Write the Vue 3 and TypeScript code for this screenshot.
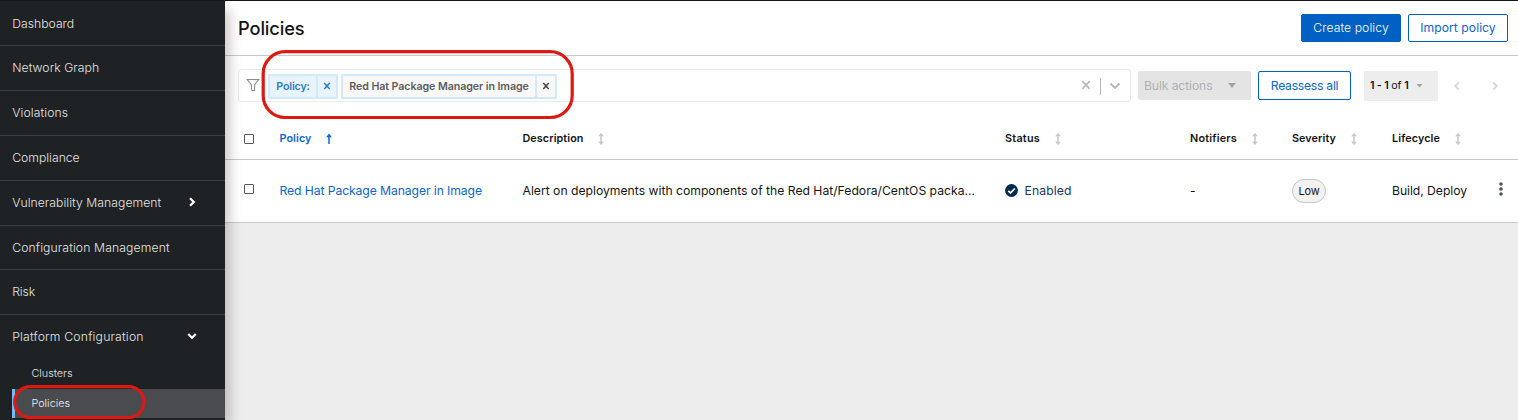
<script setup lang="ts">
import type { Directive } from 'vue'

interface NavItem { label: string; width: number; arrow?: 'right' | 'down' }
interface Column { label: string; width: number; key: string }

const navItems: NavItem[] = [
  { label: 'Dashboard', width: 62 },
  { label: 'Network Graph', width: 87 },
  { label: 'Violations', width: 56 },
  { label: 'Compliance', width: 67.5 },
  { label: 'Vulnerability Management', width: 149, arrow: 'right' },
  { label: 'Configuration Management', width: 157.5 },
  { label: 'Risk', width: 23 },
  { label: 'Platform Configuration', width: 131.5, arrow: 'down' },
]

const columns: Column[] = [
  { label: 'Description', width: 61, key: 'description' },
  { label: 'Status', width: 35, key: 'status' },
  { label: 'Notifiers', width: 47, key: 'notifiers' },
  { label: 'Severity', width: 44, key: 'severity' },
  { label: 'Lifecycle', width: 48, key: 'lifecycle' },
]

// Tracks a label out or in so that it occupies the given width in pixels.
const vFit: Directive<HTMLElement, number> = {
  mounted(el, { value }) {
    const natural = el.getBoundingClientRect().width
    const count = (el.textContent ?? '').trim().length
    if (count > 0) el.style.letterSpacing = `${(value - natural) / count}px`
  },
}
</script>

<template>
  <div class="app">
    <aside class="sidebar">
      <nav class="nav">
        <a v-for="item in navItems" :key="item.label" class="nav-item">
          <span v-fit="item.width">{{ item.label }}</span>
          <svg v-if="item.arrow" class="nav-arrow" :class="item.arrow" viewBox="0 0 10 10">
            <path d="M3 1.2 6.8 5 3 8.8" />
          </svg>
        </a>
      </nav>
      <div class="subnav">
        <a class="sub-item"><span v-fit="41">Clusters</span></a>
        <a class="sub-item active"><span v-fit="38.5">Policies</span></a>
      </div>
    </aside>

    <main class="main">
      <header class="header">
        <h1><span v-fit="66.5">Policies</span></h1>
        <div class="actions">
          <button class="btn primary"><span v-fit="75.5">Create policy</span></button>
          <button class="btn"><span v-fit="75.5">Import policy</span></button>
        </div>
      </header>

      <section class="toolbar">
        <div class="search">
          <svg class="funnel" viewBox="0 0 14 14"><path d="M1.2 1.5h11.6L8.6 6.6v5.9H6.2L5.4 11V6.6z" /></svg>
          <div class="chip category">
            <span class="chip-text"><span v-fit="33.5">Policy:</span></span>
            <span class="chip-x"><svg viewBox="0 0 8 8"><path d="M1.3 1 6.7 7M6.7 1 1.3 7" /></svg></span>
          </div>
          <div class="chip value">
            <span class="chip-text"><span v-fit="179.5">Red Hat Package Manager in Image</span></span>
            <span class="chip-x"><svg viewBox="0 0 8 8"><path d="M1.3 1 6.7 7M6.7 1 1.3 7" /></svg></span>
          </div>
          <svg class="clear" viewBox="0 0 10 10"><path d="M1.3 1.2 8.7 8.8M8.7 1.2 1.3 8.8" /></svg>
          <span class="separator"></span>
          <svg class="expand" viewBox="0 0 12 8"><path d="M1.5 1.5 6 6 10.5 1.5" /></svg>
        </div>
        <button class="bulk"><span v-fit="68.5">Bulk actions</span><i class="caret"></i></button>
        <button class="btn reassess"><span v-fit="67.5">Reassess all</span></button>
        <div class="range"><span v-fit="38.5"><b>1 - 1</b> of <b>1</b></span><i class="caret small"></i></div>
        <svg class="page prev" viewBox="0 0 8 10"><path d="M5.8 1.3 2.2 5 5.8 8.7" /></svg>
        <svg class="page next" viewBox="0 0 8 10"><path d="M2.2 1.3 5.8 5 2.2 8.7" /></svg>
      </section>

      <section class="table">
        <div class="row head">
          <span class="check"></span>
          <span class="cell sorted">
            <span v-fit="32">Policy</span>
            <svg class="sort-up" viewBox="0 0 8 12"><path class="line" d="M4 2v9" /><path class="tip" d="M4 .5 6.8 4.2H1.2z" /></svg>
          </span>
          <span v-for="column in columns" :key="column.key" class="cell">
            <span v-fit="column.width">{{ column.label }}</span>
            <svg class="sort" viewBox="0 0 8 12"><path class="line" d="M4 2v8" /><path class="tip" d="M4 0 6.8 3.2H1.2zM4 12 6.8 8.8H1.2z" /></svg>
          </span>
        </div>
        <div class="row body">
          <span class="check"></span>
          <a class="cell link"><span v-fit="202.5">Red Hat Package Manager in Image</span></a>
          <span class="cell"><span v-fit="452.5">Alert on deployments with components of the Red Hat/Fedora/CentOS packa...</span></span>
          <span class="cell enabled">
            <svg class="tick" viewBox="0 0 13 13"><circle cx="6.5" cy="6.5" r="6.4" /><path d="M3.3 6.8 5.5 9 9.8 4.5" /></svg>
            <span v-fit="47">Enabled</span>
          </span>
          <span class="cell">-</span>
          <span class="cell"><span class="badge"><span v-fit="21">Low</span></span></span>
          <span class="cell"><span v-fit="75">Build, Deploy</span></span>
          <svg class="kebab" viewBox="0 0 4 14"><circle cx="2" cy="2" r="1.8" /><circle cx="2" cy="7" r="1.8" /><circle cx="2" cy="12" r="1.8" /></svg>
        </div>
      </section>
    </main>

    <svg class="marks" viewBox="0 0 1518 420">
      <rect x="263.2" y="51.7" width="309" height="65.8" rx="22" />
      <rect x="14.7" y="386.6" width="129.3" height="31" rx="15.5" />
    </svg>
  </div>
</template>

<style>
body { background: #ededed; overflow: hidden; }
</style>

<style scoped>
.app {
  position: relative;
  display: flex;
  box-sizing: border-box;
  width: 1518px;
  height: 420px;
  border-top: 1px solid #151515;
  background: #ededed;
  color: #151515;
  font: 400 12.2px/20px Inter, "Liberation Sans", sans-serif;
  white-space: nowrap;
  overflow: hidden;
}
.app *, .app *::before { box-sizing: border-box; }
svg { display: block; flex: none; fill: none; }

.sidebar {
  position: relative;
  z-index: 1;
  flex: none;
  width: 225px;
  background: #1f2224;
  color: #e4e4e4;
  font-weight: 300;
  box-shadow: 5px 9px 12px rgba(30, 10, 5, 0.22);
}
.nav { display: grid; grid-template-rows: repeat(5, 45px) 44px 45px 44px; }
.nav-item {
  display: flex;
  align-items: center;
  justify-content: space-between;
  padding: 0 28px 0 12.2px;
  border-bottom: 1px solid #3c3f42;
}
.nav-item:first-child { padding-top: 1px; }
.nav-item:last-child { border-bottom: 0; }
.nav-arrow { width: 10px; height: 10px; margin-top: -3px; stroke: #fff; stroke-width: 2.2; }
.nav-arrow.down { transform: rotate(90deg); }
.subnav { padding-left: 12px; font-size: 10.8px; }
.sub-item { display: flex; align-items: center; height: 30px; padding: 0 0 0 19.5px; }
.sub-item.active { height: 29px; padding-left: 16.5px; border-left: 3px solid #73bcf7; background: #4a4b4e; color: #f2f2f2; }

.main { flex: 1; min-width: 0; }
.header {
  display: flex;
  align-items: center;
  justify-content: space-between;
  height: 55px;
  padding: 0 10px 0 13px;
  border-bottom: 1px solid #c9c9c9;
  background: #fff;
}
h1 { margin: 0; font-size: 18.3px; line-height: 26px; font-weight: 500; }
.actions { display: flex; gap: 7px; }
.btn {
  display: flex;
  align-items: center;
  justify-content: center;
  width: 100px;
  height: 28px;
  padding: 0;
  border: 1px solid #0060c4;
  border-radius: 2px;
  background: #fff;
  color: #0b67cb;
  font: inherit;
}
.btn.primary { background: #0060c4; color: #fff; font-weight: 300; }

.toolbar { display: flex; align-items: center; height: 59px; padding-left: 13px; background: #fff; }
.search {
  display: flex;
  align-items: center;
  width: 893px;
  height: 33px;
  padding: 1px 9px 0 8px;
  border: 1px solid #ebebeb;
  border-radius: 3px;
}
.funnel { width: 14px; height: 14px; margin-right: 8px; margin-left: -1px; margin-top: -3px; stroke: #8d8d8d; stroke-width: 1.1; }
.chip {
  display: flex;
  height: 25px;
  margin-right: 3px;
  border: 2px solid #d3e8f9;
  border-radius: 1px;
  font-size: 10.7px;
  font-weight: 600;
}
.chip-text { display: flex; align-items: center; justify-content: center; padding-top: 1px; }
.chip-x { display: flex; align-items: center; justify-content: center; flex: 1; border-left: 2px solid #d3e8f9; }
.chip-x svg { width: 8px; height: 8px; stroke: currentColor; stroke-width: 1.5; }
.category { width: 70px; background: #e7f4ff; color: #2b7cbc; }
.category .chip-text { width: 46px; }
.value { width: 216px; background: #f8f8f8; color: #5e5e5e; }
.value .chip-text { width: 192px; }
.value .chip-x { color: #444; }
.clear { width: 10px; height: 10px; margin: -2px 0 0 auto; stroke: #b8b8b8; stroke-width: 1.7; }
.separator { width: 1px; height: 17px; margin: 0 8px 0 9px; background: #b8b8b8; }
.expand { width: 12px; height: 8px; margin-top: -1px; stroke: #b5b5b5; stroke-width: 1.8; }
.bulk {
  display: flex;
  align-items: center;
  justify-content: space-between;
  width: 113px;
  height: 29px;
  margin-left: 7px;
  padding: 0 15px 0 6px;
  border: 0;
  border-radius: 2px;
  background: #e4e4e4;
  color: #b0b1b3;
  font: inherit;
}
.caret { flex: none; width: 8px; height: 5px; background: #a3a3a3; clip-path: polygon(0 0, 100% 0, 50% 100%); }
.caret.small { width: 7px; height: 4px; }
.reassess { width: 93px; height: 29px; margin-left: 7px; }
.range {
  display: flex;
  align-items: center;
  justify-content: space-between;
  width: 74px;
  height: 30px;
  margin-left: 13px;
  padding: 0 15px 0 6px;
  background: #ededed;
  font-size: 10.7px;
}
.range b { font-weight: 600; }
.page { width: 8px; height: 10px; stroke: #d3d3d3; stroke-width: 1.7; }
.prev { margin-left: 15px; }
.next { margin-left: 30px; }

.table { background: #fff; }
.row {
  display: grid;
  grid-template-columns: 35.5px 243px 482.5px 185px 102px 100px 107px 10px;
  align-items: center;
  padding-left: 19px;
  border-bottom: 1px solid #c9c9c9;
}
.head { height: 45px; padding-top: 4px; font-size: 10.8px; font-weight: 600; }
.head .check { margin-top: -1px; }
.body { height: 63px; padding-bottom: 1px; }
.cell { display: flex; align-items: center; }
.check { width: 10px; height: 10px; border: 1px solid #55595e; border-radius: 1px; background: #fff; }
.body .check { margin-top: -3px; }
.sorted { color: #0b67cb; }
.sort, .sort-up { width: 8px; height: 12px; margin-left: 13.5px; margin-top: -1px; }
.line { stroke: currentColor; stroke-width: 1.5; }
.tip { fill: currentColor; }
.sort { color: #c6c6c6; }
.link { color: #0b67cb; }
.enabled { color: #17375a; }
.tick { width: 13px; height: 13px; margin-right: 6.5px; }
.tick circle { fill: #002952; }
.tick path { stroke: #fff; stroke-width: 1.8; }
.badge {
  display: flex;
  align-items: center;
  justify-content: center;
  width: 34px;
  height: 24px;
  border: 1px solid #c7c7c7;
  border-radius: 12px;
  background: #f2f2f2;
  font-size: 11px;
}
.kebab { width: 4px; height: 14px; margin-top: -4px; fill: #4d5258; }

.marks { position: absolute; top: -1px; left: 0; z-index: 2; width: 1518px; height: 420px; pointer-events: none; }
.marks rect { stroke: #dc1a12; stroke-width: 3.2; }
</style>
